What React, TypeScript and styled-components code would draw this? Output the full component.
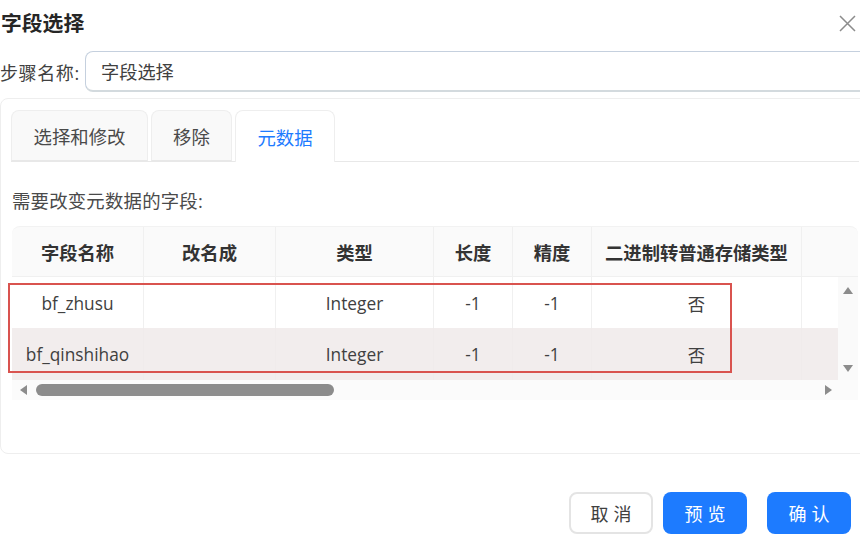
import React from 'react'
import styled, { createGlobalStyle } from 'styled-components'

const GlobalStyle = createGlobalStyle`
  html, body {
    margin: 0;
    padding: 0;
    background: #ffffff;
    overflow: hidden;
  }
  body {
    font-family: "Open Sans", "Noto Sans CJK SC", sans-serif;
    color: #333333;
  }
`

const Page = styled.div`
  width: 860px;
  height: 539px;
  overflow: hidden;
  display: flex;
  flex-direction: column;
`

const Header = styled.div`
  height: 46px;
  padding: 0 4px 0 1px;
  display: flex;
  align-items: center;
  justify-content: space-between;
`

const Title = styled.div`
  font-size: 20.8px;
  font-weight: 700;
  color: #262626;
  padding-bottom: 3px;
`

const StepRow = styled.div`
  width: 880px;
  height: 41px;
  margin-top: 5px;
  display: flex;
  align-items: center;
  gap: 5px;
`

const StepLabel = styled.label`
  font-size: 18px;
  letter-spacing: 0.6px;
  width: 80px;
  white-space: nowrap;
  color: #404040;
`

const StepInput = styled.div`
  flex: 1;
  height: 41px;
  box-sizing: border-box;
  padding-left: 15px;
  display: flex;
  align-items: center;
  font-size: 18.2px;
  color: #404040;
  border: 1px solid #c5d0de;
  border-bottom: 2px solid #d3dade;
  border-radius: 8px;
`

const Panel = styled.div`
  width: 880px;
  height: 356px;
  margin-top: 6px;
  box-sizing: border-box;
  padding: 11px 0 0 10px;
  border: 1px solid #eeeeee;
  border-radius: 8px;
`

const Tabs = styled.div`
  width: 848px;
  height: 52px;
  box-sizing: border-box;
  display: flex;
  gap: 3px;
  border-bottom: 1px solid #e8e8e8;
`

const Tab = styled.div<{ $active?: boolean; $width: number }>`
  width: ${({ $width }) => $width}px;
  height: ${({ $active }) => ($active ? 52 : 51)}px;
  box-sizing: border-box;
  display: flex;
  align-items: center;
  justify-content: center;
  font-size: 18.4px;
  color: ${({ $active }) => ($active ? '#1d7bff' : '#4a4a4a')};
  background: ${({ $active }) => ($active ? '#ffffff' : '#f9f9f9')};
  border: 1px solid #eeeeee;
  border-bottom: ${({ $active }) => ($active ? 'none' : '1px solid #e8e8e8')};
  border-radius: 8px 8px 0 0;
`

const SectionLabel = styled.div`
  height: 64px;
  margin-left: 1px;
  display: flex;
  align-items: center;
  padding-top: 12px;
  box-sizing: border-box;
  font-size: 18.4px;
  letter-spacing: 0.2px;
  color: #4a4a4a;
`

const TableWrap = styled.div`
  position: relative;
  width: 846px;
  margin-left: 1px;
`

const HeadRow = styled.div`
  height: 51px;
  display: grid;
  grid-template-columns: 132px 132px 158px 79px 79px 210px 56px;
  background: #fafafa;
  border-radius: 8px 8px 0 0;
  box-sizing: border-box;
  border-top: 1px solid #f2f2f2;
  border-bottom: 1px solid #f0f0f0;
`

const HeadCell = styled.div`
  display: flex;
  align-items: center;
  justify-content: center;
  font-size: 18.3px;
  font-weight: 700;
  color: #333333;
  white-space: nowrap;
  border-right: 1px solid #f0f0f0;
  &:last-child {
    border-right: none;
  }
`

const BodyArea = styled.div`
  display: flex;
  height: 103px;
`

const Rows = styled.div`
  width: 826px;
`

const Row = styled.div<{ $shaded?: boolean }>`
  height: ${({ $shaded }) => ($shaded ? 52 : 51)}px;
  display: grid;
  grid-template-columns: 132px 132px 158px 79px 79px 210px 36px;
  background: ${({ $shaded }) => ($shaded ? '#f2eded' : '#ffffff')};
`

const Cell = styled.div<{ $shaded?: boolean }>`
  display: flex;
  align-items: center;
  justify-content: center;
  box-sizing: border-box;
  padding-top: 1px;
  font-size: 17.3px;
  color: #404040;
  border-right: 1px solid ${({ $shaded }) => ($shaded ? '#f0ebeb' : '#f0f0f0')};
  &:last-child {
    border-right: none;
  }
`

const VerticalBar = styled.div`
  width: 20px;
  background: #fafafa;
  display: flex;
  flex-direction: column;
  align-items: center;
  justify-content: space-between;
  padding: 9px 0 8px;
  box-sizing: border-box;
`

const HorizontalBar = styled.div`
  height: 20px;
  display: flex;
  align-items: center;
  background: #fbfbfb;
  padding: 0 26px 0 7px;
  box-sizing: border-box;
`

const Thumb = styled.div`
  width: 298px;
  height: 12px;
  margin-left: 9px;
  background: #8c8c8c;
  border-radius: 6px;
`

const BarGap = styled.div`
  flex: 1;
`

const Highlight = styled.div`
  position: absolute;
  left: -4px;
  top: 57px;
  width: 724px;
  height: 90px;
  box-sizing: border-box;
  border: 2px solid #d9534f;
  pointer-events: none;
`

const Footer = styled.div`
  margin-top: 38px;
  padding-right: 9px;
  display: flex;
  justify-content: flex-end;
`

const Button = styled.div<{ $primary?: boolean; $gap: number }>`
  width: 84px;
  height: 42px;
  margin-left: ${({ $gap }) => $gap}px;
  box-sizing: border-box;
  display: flex;
  align-items: center;
  justify-content: center;
  font-size: 18px;
  letter-spacing: 5px;
  text-indent: 5px;
  border-radius: 8px;
  color: ${({ $primary }) => ($primary ? '#ffffff' : '#404040')};
  background: ${({ $primary }) => ($primary ? '#1d7bff' : '#ffffff')};
  border: ${({ $primary }) => ($primary ? 'none' : '2px solid #e4e4e4')};
`

const CloseIcon = () => (
  <svg width="17" height="17" viewBox="0 0 17 17" fill="none">
    <path d="M1 1L16 16M16 1L1 16" stroke="#8c8c8c" strokeWidth="1.5" />
  </svg>
)

const Arrow = ({ dir }: { dir: 'up' | 'down' | 'left' | 'right' }) => {
  const points = {
    up: '0,8 5,1 10,8',
    down: '0,1 10,1 5,8',
    left: '8,0 8,10 1,5',
    right: '1,0 1,10 8,5',
  }
  return (
    <svg width={dir === 'up' || dir === 'down' ? 10 : 8} height={dir === 'up' || dir === 'down' ? 8 : 10}>
      <polygon points={points[dir]} fill="#8c8c8c" />
    </svg>
  )
}

const columns = ['字段名称', '改名成', '类型', '长度', '精度', '二进制转普通存储类型', '']

const rows = [
  { name: 'bf_zhusu', type: 'Integer' },
  { name: 'bf_qinshihao', type: 'Integer' },
]

const App = () => {
  return (
    <Page>
      <GlobalStyle />
      <Header>
        <Title>字段选择</Title>
        <CloseIcon />
      </Header>
      <StepRow>
        <StepLabel>步骤名称:</StepLabel>
        <StepInput>字段选择</StepInput>
      </StepRow>
      <Panel>
        <Tabs>
          <Tab $width={137}>选择和修改</Tab>
          <Tab $width={81}>移除</Tab>
          <Tab $width={100} $active>
            元数据
          </Tab>
        </Tabs>
        <SectionLabel>需要改变元数据的字段:</SectionLabel>
        <TableWrap>
          <HeadRow>
            {columns.map((c) => (
              <HeadCell key={c}>{c}</HeadCell>
            ))}
          </HeadRow>
          <BodyArea>
            <Rows>
              {rows.map((r, i) => (
                <Row key={r.name} $shaded={i === 1}>
                  <Cell $shaded={i === 1}>{r.name}</Cell>
                  <Cell $shaded={i === 1} />
                  <Cell $shaded={i === 1}>{r.type}</Cell>
                  <Cell $shaded={i === 1}>-1</Cell>
                  <Cell $shaded={i === 1}>-1</Cell>
                  <Cell $shaded={i === 1}>否</Cell>
                  <Cell $shaded={i === 1} />
                </Row>
              ))}
            </Rows>
            <VerticalBar>
              <Arrow dir="up" />
              <Arrow dir="down" />
            </VerticalBar>
          </BodyArea>
          <HorizontalBar>
            <Arrow dir="left" />
            <Thumb />
            <BarGap />
            <Arrow dir="right" />
          </HorizontalBar>
          <Highlight />
        </TableWrap>
      </Panel>
      <Footer>
        <Button $gap={0}>取消</Button>
        <Button $gap={10} $primary>
          预览
        </Button>
        <Button $gap={20} $primary>
          确认
        </Button>
      </Footer>
    </Page>
  )
}

export default App
